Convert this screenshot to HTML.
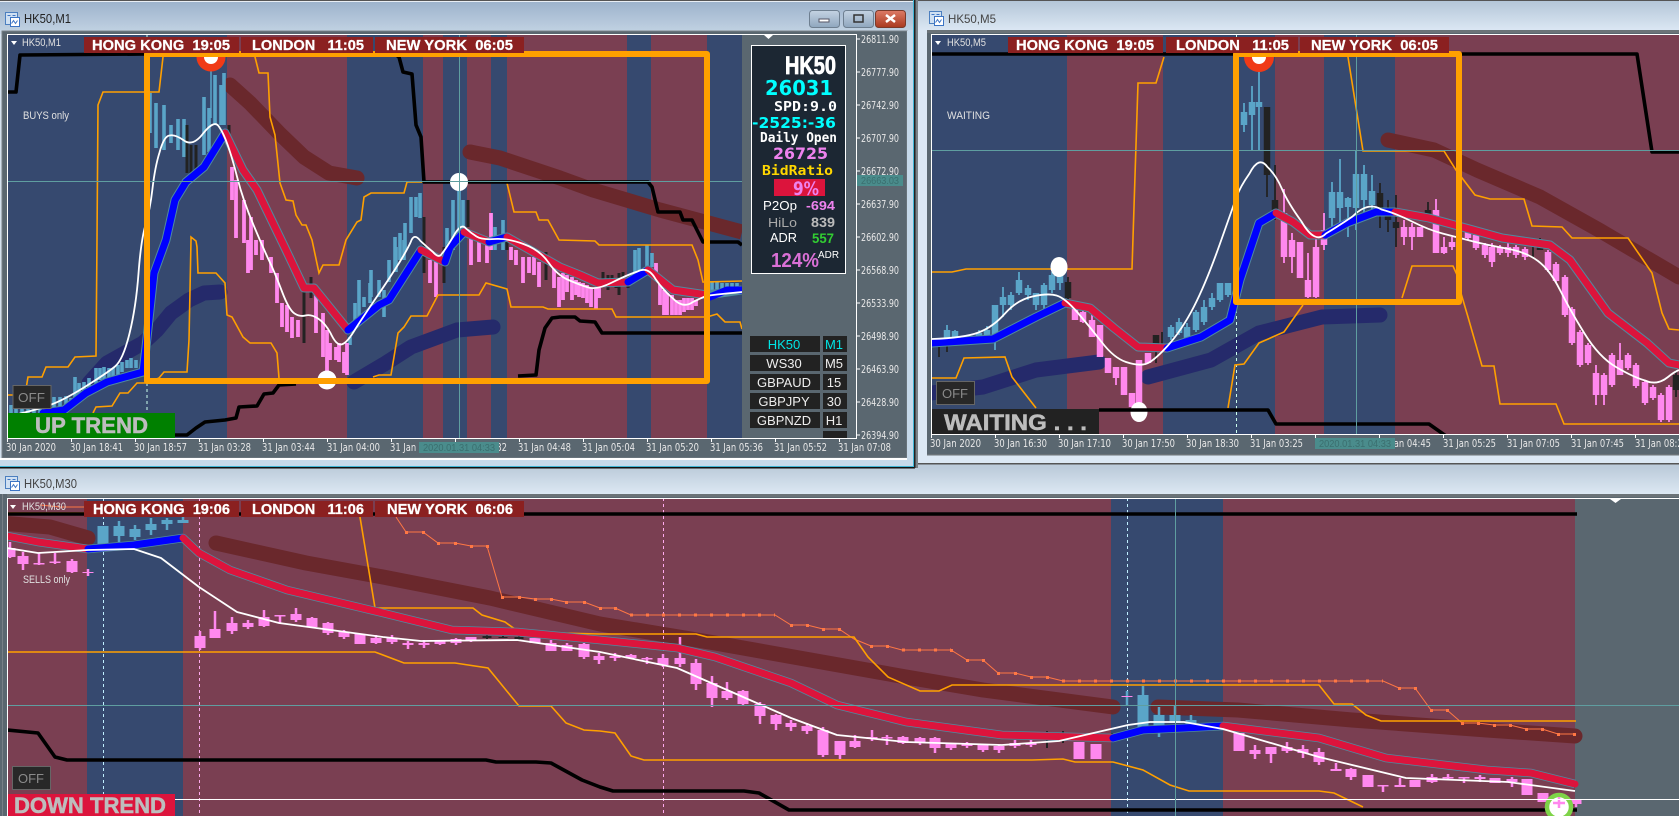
<!DOCTYPE html>
<html><head><meta charset="utf-8"><title>HK50</title>
<style>
html,body{margin:0;padding:0;background:#C4D2DF;width:1679px;height:816px;overflow:hidden}
svg{display:block;position:absolute;left:0;top:0}
text{font-family:"Liberation Sans",sans-serif}
.bar{font-weight:bold;font-size:14.500px;fill:#fff;stroke:#fff;stroke-width:.25;white-space:pre}
.ax{font-size:10.500px;fill:#e8e8e8;font-family:"DejaVu Sans","Liberation Sans",sans-serif}
.m{font-family:"DejaVu Sans Mono","Liberation Mono",monospace;font-weight:bold}
.d{font-family:"DejaVu Sans","Liberation Sans",sans-serif;font-weight:bold}
.btn{font-size:13px;fill:#eee;text-anchor:middle}
.off{font-size:13px;fill:#8a8a8a}
.lb{font-size:11px;fill:#e0e0e0}
.tr{font-weight:bold;font-size:22px;fill:#bdbdbd;stroke:#bdbdbd;stroke-width:.5}
.o{fill:none;stroke:#FFA000;stroke-width:1.600}
.k{fill:none;stroke:#000;stroke-width:3.600;stroke-linejoin:round}
.thick{fill:none;stroke:#6A282C;stroke-width:15;stroke-linecap:round;stroke-linejoin:round}
.navy{fill:none;stroke:#252A6B;stroke-width:15;stroke-linecap:round;stroke-linejoin:round}
.edge{fill:none;stroke:#4F8AA0;stroke-width:9;stroke-linejoin:round}
.b{fill:none;stroke:#0000FF;stroke-width:7;stroke-linejoin:round;stroke-linecap:round}
.r{fill:none;stroke:#DC143C;stroke-width:7;stroke-linejoin:round;stroke-linecap:round}
.w{fill:none;stroke:#fff;stroke-width:1.800;stroke-linejoin:round}
.t{fill:none;stroke:#5F9EA0;stroke-width:1}
</style></head><body>
<svg width="1679" height="816" viewBox="0 0 1679 816" xmlns="http://www.w3.org/2000/svg">
<defs>
<linearGradient id="g1" x1="0" y1="0" x2="0" y2="1"><stop offset="0" stop-color="#9DB3CC"/><stop offset="1" stop-color="#BFD0E1"/></linearGradient>
<linearGradient id="g2" x1="0" y1="0" x2="0" y2="1"><stop offset="0" stop-color="#B4C6D8"/><stop offset="1" stop-color="#DCE8F4"/></linearGradient>
<linearGradient id="g3" x1="0" y1="0" x2="0" y2="1"><stop offset="0" stop-color="#BDCCDB"/><stop offset="1" stop-color="#DCE8F3"/></linearGradient>
<linearGradient id="bt" x1="0" y1="0" x2="0" y2="1"><stop offset="0" stop-color="#C4D3E2"/><stop offset="1" stop-color="#8FA6BE"/></linearGradient>
<linearGradient id="cl" x1="0" y1="0" x2="0" y2="1"><stop offset="0" stop-color="#DD7B66"/><stop offset="1" stop-color="#A9391F"/></linearGradient>
<clipPath id="c1"><rect x="8" y="35" width="734" height="403"/></clipPath>
<clipPath id="c2"><rect x="932" y="35" width="747" height="399"/></clipPath>
<clipPath id="c3"><rect x="8" y="499" width="1582" height="317"/></clipPath>
<g id="ic"><rect x="0" y="0" width="12" height="12" fill="#CFE0F2" stroke="#4C7FBF"/><rect x="5" y="5" width="9" height="9" fill="#fff" stroke="#3C74C4"/><path d="M6 11l2-3 2 3 2-3" fill="none" stroke="#3C74C4"/><path d="M2 3h3M7 3h3" stroke="#3C74C4"/></g>
</defs>

<!-- M30 title + lower area -->
<rect x="0" y="468" width="1679" height="26" fill="url(#g3)"/>
<!-- M5 window -->
<rect x="915" y="0" width="764" height="1" fill="#555"/>
<rect x="918" y="1" width="761" height="30" fill="url(#g2)"/>
<rect x="918" y="31" width="761" height="433" fill="#DCE8F4"/>
<rect x="915" y="0" width="3" height="468" fill="#7A8288"/>
<rect x="927" y="30" width="752" height="425" fill="#5A6770"/>
<rect x="927" y="30" width="752" height="3" fill="#6B7378"/>
<rect x="927" y="454" width="752" height="1.500" fill="#6B7378"/>
<rect x="918" y="463" width="761" height="1.500" fill="#555"/>
<rect x="918" y="464.500" width="761" height="4" fill="#BDCCDB"/>
<use href="#ic" x="929.500" y="11.500"/>
<text x="948" y="23" font-size="12" fill="#444" textLength="48" lengthAdjust="spacingAndGlyphs">HK50,M5</text>

<!-- M1 window -->
<rect x="0" y="0" width="915" height="468" fill="#D4E1EE"/>
<rect x="0" y="0" width="915" height="1" fill="#555"/>
<rect x="0" y="1" width="913" height="1" fill="#E8EEF4"/>
<rect x="0" y="2" width="913" height="28" fill="url(#g1)"/>
<rect x="0" y="30" width="913" height="4" fill="#C9D8E8"/>
<rect x="2" y="31" width="905" height="427" fill="#5A6770" stroke="#777F86"/>
<rect x="0" y="458" width="913" height="2" fill="#fff"/>
<rect x="0" y="460" width="913" height="6" fill="#C6D9EA"/>
<rect x="907" y="31" width="6" height="435" fill="#C6D9EA"/>
<rect x="0" y="466" width="915" height="1" fill="#3FB4D4"/>
<rect x="0" y="467" width="915" height="1.500" fill="#111"/>
<rect x="913" y="0" width="1" height="467" fill="#3FB4D4"/>
<rect x="914" y="0" width="1.500" height="468" fill="#222"/>
<use href="#ic" x="5.500" y="12.500"/>
<text x="24" y="23" font-size="12.500" fill="#222" textLength="47" lengthAdjust="spacingAndGlyphs">HK50,M1</text>
<rect x="809.500" y="10.500" width="30" height="17" rx="3" fill="url(#bt)" stroke="#6E7F90"/>
<rect x="819" y="19" width="10" height="3" fill="#fff" stroke="#556"/>
<rect x="843.500" y="10.500" width="30" height="17" rx="3" fill="url(#bt)" stroke="#6E7F90"/>
<rect x="854" y="15" width="9" height="7" fill="none" stroke="#333" stroke-width="1.500"/>
<rect x="875.500" y="10.500" width="30" height="17" rx="3" fill="url(#cl)" stroke="#7A3A2A"/>
<path d="M886 15l9 7M895 15l-9 7" stroke="#fff" stroke-width="2.500"/>

<!-- ============ M1 CHART ============ -->
<g shape-rendering="crispEdges">
<rect x="7" y="34" width="220" height="404" fill="#36496F"/>
<rect x="227" y="34" width="120" height="404" fill="#7A3F52"/>
<rect x="347" y="34" width="76" height="404" fill="#36496F"/>
<rect x="423" y="34" width="20" height="404" fill="#7A3F52"/>
<rect x="443" y="34" width="24" height="404" fill="#36496F"/>
<rect x="467" y="34" width="24" height="404" fill="#7A3F52"/>
<rect x="491" y="34" width="16" height="404" fill="#36496F"/>
<rect x="507" y="34" width="120" height="404" fill="#7A3F52"/>
<rect x="627" y="34" width="24" height="404" fill="#36496F"/>
<rect x="651" y="34" width="56" height="404" fill="#7A3F52"/>
<rect x="707" y="34" width="35" height="404" fill="#36496F"/>
</g>
<g clip-path="url(#c1)">
<polyline class="thick" points="230,85 250,103 279,133 304,157 329,173 357,178"/>
<polyline class="thick" style="stroke-linecap:butt" points="470,152 500,158 536,170 560,178 593,190 660,210 742,232"/>
<circle cx="470" cy="152" r="7.500" fill="#6A282C"/>
<polyline class="navy" points="89,383 107,363 143,343 157,330 171,313 189,300 204,293 220,292"/>
<polyline class="navy" points="354,382 386,363 411,347 457,330 493,327"/>
<line x1="147" y1="35" x2="147" y2="438" stroke="#cfe" stroke-dasharray="3 3"/>
<!-- candles -->
<path fill="none" stroke="#5AA5C8" stroke-width="3.600" d="M11 405V413M16 403V413M22 402V413M28 400V413M34 400V413M40 399V413M46 398V413M54 397V410M60 397V408M66 396V408M71 398V406M75 377V400M79 383V400M84 382V395M89 378V393M96 368V387M100 368V380M104 367V380M109 368V382M113 368V380M118 365V377M122 362V372M127 360V368M131 358V368M136 360V368M150 93V133M156 103V148M164 105V150M171 125V143M178 119V150M184 119V157M204 97V155M209 108V152M215 75V125M221 85V125M224 73V125M350 337V345M355 303V323M359 280V317M364 297V307M370 283V303M371 270V297M379 280V297M384 290V317M389 260V282M395 237V272M396 247V272M400 233V260M404 240V260M405 223V250M411 197V233M416 197V217M420 193V218M447 228V250M453 200V250M459 190V240M463 200V230M495 227V250M503 220V250M635 250V273M639 248V275M647 245V268M652 253V267M712 282V298M717 282V296M722 283V294M727 283V292M732 283V292M737 283V290"/>
<path fill="none" stroke="#5AA5C8" stroke-width="1.500" d="M211 57V118"/>
<path fill="none" stroke="#222" stroke-width="3" d="M187 125V173M191 145V175M196 145V173M229 125V135M304 290V343M311 277V298M424 217V273M444 247V283M468 200V227M507 235V250M546 252V280M603 272V283M608 275V290M612 275V283M616 278V288M619 273V295M623 272V282M628 280V288"/>
<path fill="none" stroke="#FF88EE" stroke-width="3.800" d="M232 167V200M236 180V238M244 200V243M248 240V273M251 217V270M256 240V255M262 240V260M271 257V273M277 273V303M282 303V327M287 305V332M292 317V338M298 320V337M316 293V333M323 313V357M327 330V373M330 343V360M336 347V360M339 343V362M344 352V373M347 343V375M430 260V283M436 260V297M471 238V265M479 240V262M487 240V263M491 213V250M511 247V260M516 250V265M523 257V283M529 257V273M534 257V275M539 262V287M554 260V288M559 277V307M563 273V300M567 275V292M572 277V300M576 280V295M579 282V297M583 283V298M587 285V303M591 288V307M596 288V309M599 288V298M656 263V277M660 283V305M664 290V315M667 293V315M672 295V315M676 300V315M680 300V315M684 298V312M688 298V310M692 298V310M696 300V306"/>
<!-- orange -->
<polyline class="o" points="7,395 25,395 28,377 42,377 46,367 68,367 75,357 96,356 97,240 98,105 103,92 159,92 163,57 165,40"/>
<polyline class="o" points="252,40 255,57 259,73 268,73 270,117 275,135 280,183 286,200 293,201 296,215 302,225 306,225 312,240 319,273 323,265 339,265 346,240 357,222 361,220 364,197 371,193 404,193 407,182 425,182"/>
<polyline class="o" points="507,183 514,212 536,212 539,220 548,220 559,240 595,241 599,245 692,245 698,260 703,282 742,281"/>
<polyline class="o" points="93,413 96,407 112,406 120,393 128,393 137,383 147,383 159,378 164,372 187,372 189,340 191,240 191,237 196,241 197,247 198,273 216,273 225,283 227,315 232,317 243,337 250,343 271,343 277,353 279,378"/>
<polyline class="o" points="373,377 379,375 391,375 398,333 404,327 411,316 427,316 438,295 479,295 486,283 507,289 511,307 543,307 548,309 612,309 616,317 707,317 717,314 725,322 740,322 742,329"/>
<!-- black -->
<polyline class="k" points="7,92 16,92 20,55 145,54 395,54 399,57 403,72 412,74 416,125 421,137 424,182 648,182 652,187 658,212 680,212 683,220 692,220 703,242 738,242 742,245"/>
<polyline class="k" points="175,435 187,435 196,428 205,422 225,420 236,418 239,407 257,406 264,394 273,393 279,385 296,384"/>
<polyline class="k" points="518,376 536,375 539,350 545,328 552,318 560,317 575,317 580,321 595,322 602,333 742,333"/>
<!-- MA -->
<polyline class="edge" points="43,413 64,410 86,393 107,382 143,372 146,347 154,273 166,240 175,200 186,182 204,167 225,133 243,170 257,190 286,250 304,288 314,288 348,330 379,305 389,300 421,250 445,262 450,247 464,232 489,242 507,237 560,267 580,275 598,283 628,282 648,270 673,290 707,295 742,290"/>
<polyline class="b" points="43,413 64,410 86,393 107,382 143,372 146,347 154,273 166,240 175,200 186,182 204,167 225,133"/>
<polyline class="r" points="225,133 243,170 257,190 286,250 304,288 314,288 348,330"/>
<polyline class="b" points="348,330 379,305 389,300 421,250"/>
<polyline class="r" points="421,250 445,262"/>
<polyline class="b" points="445,262 450,247 464,232"/>
<polyline class="r" points="464,232 489,242"/>
<polyline class="b" points="489,242 507,237"/>
<polyline class="r" points="507,237 560,267 580,275 598,283 628,282"/>
<polyline class="b" points="628,282 648,270"/>
<polyline class="r" points="648,270 673,290 707,295"/>
<polyline class="b" points="710,297 727,290 742,290"/>
<path class="w" d="M14 415Q36 410 50 405Q64 400 85.500 386.500Q107 373 115 366.500Q123 360 129.500 333.500Q136 307 138.500 273.500Q141 240 145.500 225Q150 210 152.500 188.500Q155 167 159.500 152.500Q164 136 169.500 135.500Q175 134 184 140.500Q193 147 203.500 133Q214 120 218.500 126Q223 132 227.500 144.500Q232 157 237.500 178.500Q243 200 253.500 225Q264 250 269.500 261.500Q275 273 282 291.500Q289 310 294.500 313.500Q300 317 305.500 315.500Q311 314 318 318.500Q325 323 330.500 333Q336 345 341 344.500Q346 344 353.500 332Q361 320 377 296.500Q393 273 400 261.500Q407 250 410.500 242.500Q414 232 420.500 241Q427 247 433 252Q439 259 442 253.500Q445 250 453 237Q461 222 466 228.500Q471 233 476.500 236.500Q482 240 494.500 239Q507 238 523.500 244Q540 250 548.500 262.500Q557 275 568.500 280Q580 285 588.500 287.500Q597 290 612 282.500Q627 275 637.500 271.500Q648 266 655.500 279Q663 290 673 298.500Q683 309 693 302Q703 297 706.500 296Q710 295 742 292"/>
<!-- crosshair + circles -->
<circle cx="211" cy="57" r="14.500" fill="#F03A17"/><circle cx="211" cy="57" r="7" fill="#fff"/>
<circle cx="459" cy="182" r="9" fill="#fff"/>
<circle cx="327" cy="380" r="9.500" fill="#fff"/>
<line class="t" x1="7" y1="181.500" x2="857" y2="181.500"/>
<line class="t" x1="459.500" y1="34" x2="459.500" y2="438"/>
<!-- frame rect -->
<rect x="147" y="54" width="560" height="327" fill="none" stroke="#FFA000" stroke-width="6" stroke-linejoin="round"/>
</g>
<rect x="7.500" y="34.500" width="849" height="404" fill="none" stroke="#fff"/>
<path d="M764 35h9l-4.500 4z" fill="#fff"/>
<!-- timebars -->
<g shape-rendering="crispEdges" fill="#8B2020"><rect x="84" y="37" width="155" height="16"/><rect x="241" y="37" width="132" height="16"/><rect x="375" y="37" width="149" height="16"/></g>
<text class="bar" x="92" y="50" textLength="138" lengthAdjust="spacingAndGlyphs">HONG KONG  19:05</text>
<text class="bar" x="252" y="50" textLength="112" lengthAdjust="spacingAndGlyphs">LONDON   11:05</text>
<text class="bar" x="386" y="50" textLength="127" lengthAdjust="spacingAndGlyphs">NEW YORK  06:05</text>
<path d="M11 41h6l-3 4z" fill="#fff"/>
<text class="lb" x="22" y="46" textLength="39" lengthAdjust="spacingAndGlyphs">HK50,M1</text>
<text class="lb" x="23" y="119" textLength="46" lengthAdjust="spacingAndGlyphs">BUYS only</text>
<rect x="13" y="385.500" width="38" height="23" fill="#282828" stroke="#666"/>
<text class="off" x="18" y="402" textLength="27" lengthAdjust="spacingAndGlyphs">OFF</text>
<rect x="8" y="413" width="167" height="25" fill="#008000"/>
<text class="tr" x="35" y="433" textLength="113" lengthAdjust="spacingAndGlyphs">UP TREND</text>
<!-- info panel -->
<rect x="751.500" y="45.500" width="94" height="228" fill="#1C2733" stroke="#fff"/>
<text x="785" y="74" font-size="25" font-weight="bold" fill="#fff" stroke="#fff" stroke-width=".8" textLength="51" lengthAdjust="spacingAndGlyphs">HK50</text>
<text class="d" x="765" y="95" font-size="20" fill="#00FFFF" textLength="68" lengthAdjust="spacingAndGlyphs">26031</text>
<text class="m" x="774" y="111" font-size="13.500" fill="#fff" textLength="63" lengthAdjust="spacingAndGlyphs">SPD:9.0</text>
<text class="d" x="752" y="128" font-size="15" fill="#00FFFF" textLength="84" lengthAdjust="spacingAndGlyphs">-2525:-36</text>
<text class="m" x="760" y="142" font-size="13" fill="#fff" textLength="77" lengthAdjust="spacingAndGlyphs">Daily Open</text>
<text class="d" x="773" y="159" font-size="16" fill="#EE82EE" textLength="55" lengthAdjust="spacingAndGlyphs">26725</text>
<text class="m" x="762" y="175" font-size="13.500" fill="#FFD700" textLength="71" lengthAdjust="spacingAndGlyphs">BidRatio</text>
<rect x="774" y="179" width="51" height="17" fill="#DC143C"/>
<text class="d" x="793" y="195" font-size="19" fill="#EE82EE" textLength="26" lengthAdjust="spacingAndGlyphs">9%</text>
<text x="763" y="210" font-size="13" fill="#fff" textLength="34" lengthAdjust="spacingAndGlyphs">P2Op</text>
<text x="806" y="210" font-size="13" font-weight="bold" fill="#EE82EE" textLength="29" lengthAdjust="spacingAndGlyphs">-694</text>
<text x="768" y="227" font-size="13" fill="#aaa" textLength="29" lengthAdjust="spacingAndGlyphs">HiLo</text>
<text x="811" y="227" font-size="13.500" font-weight="bold" fill="#bbb" textLength="24" lengthAdjust="spacingAndGlyphs">839</text>
<text x="770" y="242" font-size="13" fill="#fff" textLength="27" lengthAdjust="spacingAndGlyphs">ADR</text>
<text x="812" y="243" font-size="13.500" font-weight="bold" fill="#32CD32" textLength="22" lengthAdjust="spacingAndGlyphs">557</text>
<text x="771" y="267" font-size="20" font-weight="bold" fill="#DA70D6" textLength="48" lengthAdjust="spacingAndGlyphs">124%</text>
<text x="818" y="258" font-size="10.500" fill="#fff" textLength="21" lengthAdjust="spacingAndGlyphs">ADR</text>
<!-- symbol buttons -->
<g fill="#222"><rect x="750" y="336" width="70" height="16"/><rect x="823" y="336" width="24" height="16"/><rect x="750" y="355" width="70" height="16"/><rect x="823" y="355" width="24" height="16"/><rect x="750" y="374" width="70" height="16"/><rect x="823" y="374" width="24" height="16"/><rect x="750" y="393" width="70" height="16"/><rect x="823" y="393" width="24" height="16"/><rect x="750" y="412" width="70" height="16"/><rect x="823" y="412" width="24" height="16"/><rect x="823" y="431" width="24" height="7"/></g>
<text class="btn" x="784" y="349" style="fill:#00E5E5">HK50</text><text class="btn" x="834" y="349" style="fill:#00E5E5">M1</text>
<text class="btn" x="784" y="368">WS30</text><text class="btn" x="834" y="368">M5</text>
<text class="btn" x="784" y="387">GBPAUD</text><text class="btn" x="834" y="387">15</text>
<text class="btn" x="784" y="406">GBPJPY</text><text class="btn" x="834" y="406">30</text>
<text class="btn" x="784" y="425">GBPNZD</text><text class="btn" x="834" y="425">H1</text>
<!-- price axis -->
<path stroke="#fff" d="M856 39h4M856 72h4M856 105h4M856 138h4M856 171h4M856 204h4M856 237h4M856 270h4M856 303h4M856 336h4M856 369h4M856 402h4M856 435h4"/>
<text class="ax" x="861" y="43" textLength="38" lengthAdjust="spacingAndGlyphs">26811.90</text>
<text class="ax" x="861" y="76" textLength="38" lengthAdjust="spacingAndGlyphs">26777.90</text>
<text class="ax" x="861" y="109" textLength="38" lengthAdjust="spacingAndGlyphs">26742.90</text>
<text class="ax" x="861" y="142" textLength="38" lengthAdjust="spacingAndGlyphs">26707.90</text>
<text class="ax" x="861" y="175" textLength="38" lengthAdjust="spacingAndGlyphs">26672.90</text>
<text class="ax" x="861" y="208" textLength="38" lengthAdjust="spacingAndGlyphs">26637.90</text>
<text class="ax" x="861" y="241" textLength="38" lengthAdjust="spacingAndGlyphs">26602.90</text>
<text class="ax" x="861" y="274" textLength="38" lengthAdjust="spacingAndGlyphs">26568.90</text>
<text class="ax" x="861" y="307" textLength="38" lengthAdjust="spacingAndGlyphs">26533.90</text>
<text class="ax" x="861" y="340" textLength="38" lengthAdjust="spacingAndGlyphs">26498.90</text>
<text class="ax" x="861" y="373" textLength="38" lengthAdjust="spacingAndGlyphs">26463.90</text>
<text class="ax" x="861" y="406" textLength="38" lengthAdjust="spacingAndGlyphs">26428.90</text>
<text class="ax" x="861" y="439" textLength="38" lengthAdjust="spacingAndGlyphs">26394.90</text>
<rect x="857" y="175" width="46" height="11" fill="#4A8C8C"/>
<text x="861" y="184" font-size="10" fill="#3B6F6F" textLength="38" lengthAdjust="spacingAndGlyphs">26663.03</text>
<!-- time axis -->
<path stroke="#fff" d="M7.500 438v4M71.500 438v4M135.500 438v4M199.500 438v4M263.500 438v4M327.500 438v4M391.500 438v4M455.500 438v4M519.500 438v4M583.500 438v4M647.500 438v4M711.500 438v4M775.500 438v4M839.500 438v4"/>
<text class="ax" x="6" y="451" textLength="50" lengthAdjust="spacingAndGlyphs">30 Jan 2020</text>
<text class="ax" x="70" y="451" textLength="53" lengthAdjust="spacingAndGlyphs">30 Jan 18:41</text>
<text class="ax" x="134" y="451" textLength="53" lengthAdjust="spacingAndGlyphs">30 Jan 18:57</text>
<text class="ax" x="198" y="451" textLength="53" lengthAdjust="spacingAndGlyphs">31 Jan 03:28</text>
<text class="ax" x="262" y="451" textLength="53" lengthAdjust="spacingAndGlyphs">31 Jan 03:44</text>
<text class="ax" x="327" y="451" textLength="53" lengthAdjust="spacingAndGlyphs">31 Jan 04:00</text>
<text class="ax" x="390" y="451" textLength="53" lengthAdjust="spacingAndGlyphs">31 Jan 04:16</text>
<text class="ax" x="454" y="451" textLength="53" lengthAdjust="spacingAndGlyphs">31 Jan 04:32</text>
<text class="ax" x="518" y="451" textLength="53" lengthAdjust="spacingAndGlyphs">31 Jan 04:48</text>
<text class="ax" x="582" y="451" textLength="53" lengthAdjust="spacingAndGlyphs">31 Jan 05:04</text>
<text class="ax" x="646" y="451" textLength="53" lengthAdjust="spacingAndGlyphs">31 Jan 05:20</text>
<text class="ax" x="710" y="451" textLength="53" lengthAdjust="spacingAndGlyphs">31 Jan 05:36</text>
<text class="ax" x="774" y="451" textLength="53" lengthAdjust="spacingAndGlyphs">31 Jan 05:52</text>
<text class="ax" x="838" y="451" textLength="53" lengthAdjust="spacingAndGlyphs">31 Jan 07:08</text>
<rect x="419" y="442" width="80" height="11" fill="#4A8C8C"/>
<text x="423" y="451" font-size="10" fill="#3B6F6F" textLength="72" lengthAdjust="spacingAndGlyphs">2020.01.31 04:33</text>

<!-- ============ M5 CHART ============ -->
<g shape-rendering="crispEdges">
<rect x="931" y="34" width="136" height="400" fill="#36496F"/>
<rect x="1067" y="34" width="96" height="400" fill="#7A3F52"/>
<rect x="1163" y="34" width="112" height="400" fill="#36496F"/>
<rect x="1275" y="34" width="49" height="400" fill="#7A3F52"/>
<rect x="1324" y="34" width="71" height="400" fill="#36496F"/>
<rect x="1395" y="34" width="284" height="400" fill="#7A3F52"/>
</g>
<g clip-path="url(#c2)">
<polyline class="thick" points="1388,140 1434,150 1477,170 1540,197 1599,230 1679,277"/>
<polyline class="navy" points="931,393 983,387 1036,370 1099,362"/>
<polyline class="navy" points="1148,377 1211,360 1259,333 1322,317 1380,315"/>
<line x1="1236.500" y1="34" x2="1236.500" y2="434" stroke="#cfe" stroke-dasharray="3 3"/>
<path fill="none" stroke="#5AA5C8" stroke-width="1.800" d="M947 325V340M955 330V340M979 330V340M987 326V340M995 305V350M1003 287V317M1011 292V310M1019 272V295M1028 285V300M1036 293V310M1044 283V310M1052 272V293M1060 270V290M1171 325V340M1179 318V335M1187 323V342M1196 310V332M1204 300V325M1212 293V310M1220 283V302M1228 283V297M1244 103V132M1252 86V150M1259 57V150M1332 182V232M1340 159V228M1348 197V237M1356 150V230M1364 165V220M1372 175V213"/>
<path fill="none" stroke="#5AA5C8" stroke-width="6.500" d="M947 330V338M955 331V340M979 333V337M987 330V337M995 305V337M1003 297V305M1011 295V305M1019 280V293M1028 288V295M1036 293V305M1044 285V305M1052 275V290M1060 273V283M1171 327V337M1179 322V333M1187 327V340M1196 312V330M1204 307V322M1212 298V307M1220 283V300M1228 283V295M1244 112V125M1252 102V115M1259 102V107M1332 192V218M1340 192V208M1348 198V207M1356 174V208M1364 174V200M1372 191V205"/>
<path fill="none" stroke="#222" stroke-width="1.800" d="M939 347V357M947 345V352M1068 277V300M1156 335V363M1162 332V345M1267 107V197M1275 165V220M1380 183V228M1388 200V232M1396 195V247M1428 202V220M1533 247V257M1540 238V250M1676 370V397"/>
<path fill="none" stroke="#222" stroke-width="6.500" d="M1068 282V298M1156 335V345M1267 107V175M1275 200V210M1380 193V213M1388 213V220M1396 222V228M1428 210V215M1540 240V250M1676 375V390"/>
<path fill="none" stroke="#FF88EE" stroke-width="1.800" d="M1075 305V320M1083 310V323M1092 315V337M1100 325V357M1108 358V373M1116 367V385M1124 367V395M1132 393V407M1139 360V408M1148 353V363M1284 189V263M1292 233V273M1300 242V278M1308 253V298M1316 237V298M1324 213V250M1404 220V245M1412 223V250M1420 227V237M1436 199V253M1444 237V254M1452 237V250M1468 230V240M1476 233V250M1485 243V258M1492 243V267M1500 245V255M1508 242V257M1516 245V258M1525 247V260M1548 250V272M1556 262V283M1565 275V317M1572 307V345M1580 330V367M1588 343V365M1596 365V405M1604 373V405M1612 353V387M1620 343V375M1628 353V370M1636 363V388M1645 380V405M1653 385V400M1661 393V422M1669 385V422"/>
<path fill="none" stroke="#FF88EE" stroke-width="6.500" d="M1075 307V320M1083 312V322M1092 320V337M1100 325V357M1108 358V373M1116 367V378M1124 367V395M1132 393V407M1139 360V408M1148 353V363M1284 213V257M1292 240V257M1300 242V278M1308 280V297M1316 247V297M1324 230V245M1404 227V237M1412 227V237M1420 227V237M1436 210V253M1444 247V253M1452 242V247M1468 232V238M1476 235V248M1485 245V255M1492 247V262M1500 247V253M1508 247V253M1516 247V255M1525 249V257M1548 252V270M1556 264V281M1565 277V315M1572 309V343M1580 332V365M1588 345V363M1596 373V395M1604 375V395M1612 355V385M1620 360V375M1628 355V368M1636 365V386M1645 382V403M1653 387V398M1661 395V420M1669 387V420"/>
<polyline class="o" points="931,272 952,272 966,269 1132,269 1138,83 1156,83 1164,57"/>
<polyline class="o" points="1348,57 1363,151 1444,151 1456,170 1475,195 1490,199 1524,199 1532,226 1562,227 1572,238 1628,238 1652,273 1662,313 1669,329 1679,330"/>
<polyline class="o" points="931,378 956,378 964,358 1005,357 1012,377 1036,408"/>
<polyline class="o" points="1228,408 1235,365 1244,364 1259,343 1284,332 1303,305"/>
<polyline class="o" points="1402,298 1412,266 1453,266 1458,277 1460,290 1468,317 1482,366 1494,366 1500,404 1556,404 1564,424 1679,424"/>
<ellipse cx="1059" cy="267" rx="8.500" ry="10" fill="#fff"/>
<ellipse cx="1139" cy="412" rx="8.500" ry="10" fill="#fff"/>
<polyline class="k" points="931,54 1637,54 1652,152 1679,152"/>
<polyline class="k" points="1099,410 1268,410 1276,424 1429,424 1446,436"/>
<polyline class="edge" points="931,343 993,339 1036,317 1065,303 1090,308 1114,328 1138,347 1167,348 1201,337 1230,320 1240,280 1259,223 1276,213 1293,222 1310,235 1325,235 1347,223 1376,212 1395,212 1429,218 1473,230 1502,238 1550,245 1570,260 1608,313 1647,343 1669,363 1679,365"/>
<polyline class="b" points="931,343 993,339 1036,317 1065,303"/>
<polyline class="r" points="1065,303 1090,308 1114,328 1138,347 1167,348"/>
<polyline class="b" points="1167,348 1201,337 1230,320 1240,280 1259,223 1276,213"/>
<polyline class="r" points="1276,213 1293,222 1310,235 1325,235"/>
<polyline class="b" points="1325,235 1347,223 1376,212 1395,212"/>
<polyline class="r" points="1395,212 1429,218 1473,230 1502,238 1550,245 1570,260 1608,313 1647,343 1669,363 1679,365"/>
<path class="w" d="M931 339Q964 338 978.500 332.500Q993 327 1005 313.500Q1017 300 1032.500 296.500Q1048 293 1056.500 295.500Q1065 298 1077.500 312.500Q1090 327 1102 342.500Q1114 358 1126 362Q1138 366 1145.500 364Q1153 362 1167.500 346Q1182 330 1194 306.500Q1206 283 1219.500 245Q1233 207 1236.500 197Q1240 187 1249.500 173.500Q1259 155 1267.500 167Q1276 175 1282 189Q1288 203 1301.500 221.500Q1315 245 1326 233.500Q1337 227 1352.500 216.500Q1368 201 1381.500 209.500Q1395 213 1412 221.500Q1429 230 1442.500 233.500Q1456 237 1471.500 241Q1487 245 1506.500 248.500Q1526 252 1538 261Q1550 270 1560 290Q1570 310 1584.500 333.500Q1599 357 1616 367Q1633 377 1645 380.500Q1657 386 1668 377Q1674 372 1679 370"/>
<circle cx="1259" cy="57" r="15" fill="#F03A17"/><circle cx="1259" cy="57" r="7" fill="#fff"/>
<line class="t" x1="931" y1="150.500" x2="1679" y2="150.500"/>
<line class="t" x1="1356.500" y1="34" x2="1356.500" y2="434"/>
<rect x="1236" y="54" width="223" height="248" fill="none" stroke="#FFA000" stroke-width="6" stroke-linejoin="round"/>
</g>
<rect x="931.500" y="34.500" width="760" height="400" fill="none" stroke="#fff"/>
<g shape-rendering="crispEdges" fill="#8B2020"><rect x="1008" y="37" width="155" height="16"/><rect x="1166" y="37" width="132" height="16"/><rect x="1300" y="37" width="149" height="16"/></g>
<text class="bar" x="1016" y="50" textLength="138" lengthAdjust="spacingAndGlyphs">HONG KONG  19:05</text>
<text class="bar" x="1176" y="50" textLength="113" lengthAdjust="spacingAndGlyphs">LONDON   11:05</text>
<text class="bar" x="1311" y="50" textLength="127" lengthAdjust="spacingAndGlyphs">NEW YORK  06:05</text>
<path d="M935 41h6l-3 4z" fill="#fff"/>
<text class="lb" x="947" y="46" textLength="39" lengthAdjust="spacingAndGlyphs">HK50,M5</text>
<text class="lb" x="947" y="119" textLength="43" lengthAdjust="spacingAndGlyphs">WAITING</text>
<rect x="936.500" y="381.500" width="38" height="23" fill="#282828" stroke="#666"/>
<text class="off" x="942" y="398" textLength="26" lengthAdjust="spacingAndGlyphs">OFF</text>
<rect x="932" y="409" width="167" height="25" fill="#222"/>
<text class="tr" x="944" y="430" textLength="143" lengthAdjust="spacingAndGlyphs">WAITING . . .</text>
<path stroke="#fff" d="M931.500 434v4M995.500 434v4M1059.500 434v4M1123.500 434v4M1187.500 434v4M1251.500 434v4M1315.500 434v4M1379.500 434v4M1443.500 434v4M1507.500 434v4M1571.500 434v4M1635.500 434v4"/>
<text class="ax" x="930" y="447" textLength="51" lengthAdjust="spacingAndGlyphs">30 Jan 2020</text>
<text class="ax" x="994" y="447" textLength="53" lengthAdjust="spacingAndGlyphs">30 Jan 16:30</text>
<text class="ax" x="1058" y="447" textLength="53" lengthAdjust="spacingAndGlyphs">30 Jan 17:10</text>
<text class="ax" x="1122" y="447" textLength="53" lengthAdjust="spacingAndGlyphs">30 Jan 17:50</text>
<text class="ax" x="1186" y="447" textLength="53" lengthAdjust="spacingAndGlyphs">30 Jan 18:30</text>
<text class="ax" x="1250" y="447" textLength="53" lengthAdjust="spacingAndGlyphs">31 Jan 03:25</text>
<text class="ax" x="1378" y="447" textLength="53" lengthAdjust="spacingAndGlyphs">31 Jan 04:45</text>
<text class="ax" x="1443" y="447" textLength="53" lengthAdjust="spacingAndGlyphs">31 Jan 05:25</text>
<text class="ax" x="1507" y="447" textLength="53" lengthAdjust="spacingAndGlyphs">31 Jan 07:05</text>
<text class="ax" x="1571" y="447" textLength="53" lengthAdjust="spacingAndGlyphs">31 Jan 07:45</text>
<text class="ax" x="1635" y="447" textLength="53" lengthAdjust="spacingAndGlyphs">31 Jan 08:25</text>
<rect x="1315" y="438" width="80" height="11" fill="#4A8C8C"/>
<text x="1319" y="447" font-size="10" fill="#3B6F6F" textLength="72" lengthAdjust="spacingAndGlyphs">2020.01.31 04:33</text>

<!-- ============ M30 ============ -->
<use href="#ic" x="5.500" y="476.500"/>
<text x="24" y="488" font-size="12.500" fill="#444" textLength="53" lengthAdjust="spacingAndGlyphs">HK50,M30</text>
<rect x="0" y="494" width="1679" height="322" fill="#5A6770"/>
<rect x="0" y="494" width="1679" height="3" fill="#6B7378"/>
<g shape-rendering="crispEdges">
<rect x="7" y="498" width="80" height="318" fill="#7A3F52"/>
<rect x="87" y="498" width="96" height="318" fill="#36496F"/>
<rect x="183" y="498" width="928" height="318" fill="#7A3F52"/>
<rect x="1111" y="498" width="112" height="318" fill="#36496F"/>
<rect x="1223" y="498" width="352" height="318" fill="#7A3F52"/>
</g>
<g clip-path="url(#c3)">
<polyline class="thick" style="stroke-linecap:round" points="0,523 50,527 88,538"/>
<polyline class="thick" points="216,543 306,563 383,577 490,598 600,624 715,643 906,677 983,690 1113,707"/>
<polyline class="thick" points="1158,707 1238,710 1352,720 1487,730 1575,736"/>
<line x1="103.500" y1="498" x2="103.500" y2="816" stroke="#BFEFFF" stroke-dasharray="3 3"/>
<line x1="1127.500" y1="498" x2="1127.500" y2="816" stroke="#BFEFFF" stroke-dasharray="3 3"/>
<line x1="199.500" y1="498" x2="199.500" y2="816" stroke="#FFAAEE" stroke-dasharray="3 3"/>
<line x1="663.500" y1="498" x2="663.500" y2="816" stroke="#FFAAEE" stroke-dasharray="3 3"/>
<!-- blue candles -->
<path fill="none" stroke="#5AA5C8" stroke-width="2.500" d="M119 521V542M135 525V540M151 518V535M167 518V530M183 517V523M1127 691V706M1143 686V727M1159 707V737M1175 705V722M1191 715V723"/>
<path fill="none" stroke="#5AA5C8" stroke-width="11" d="M103 526V545M119 526V536M135 529V537M151 524V530M167 520V524M183 520V523M1143 695V727M1159 715V727M1175 715V723M1191 720V724"/>
<path fill="none" stroke="#FF88EE" stroke-width="2.500" d="M10 542V558M23 552V570M39 553V565M55 553V564M72 559V573M88 569V576M200 631V650M215 611V638M232 617V634M248 620V629M264 610V627M280 615V623M296 608V622M312 617V627M328 622V635M344 630V639M376 635V644M392 635V644M408 641V649M424 640V648M440 640V645M456 638V645M471 637V642M535 638V643M551 640V651M567 643V651M584 643V659M599 653V664M615 653V661M631 654V659M647 657V664M663 654V667M680 637V667M696 659V690M712 676V707M727 682V700M743 690V705M760 702V724M776 714V730M791 720V731M807 723V734M823 727V757M840 741V759M855 735V748M872 730V741M887 735V745M903 736V744M920 737V745M935 737V753M951 744V750M967 742V748M983 745V752M999 745V753M1015 740V748M1031 740V747M1255 745V759M1271 747V763M1287 742V753M1303 745V758M1319 748V765M1336 763V771M1351 768V780M1383 785V792M1400 778V787M1432 774V783M1448 774V780M1464 777V783M1480 775V782M1512 777V787M1543 793V802M1559 797V808M1576 799V807"/>
<path fill="none" stroke="#FF88EE" stroke-width="11" d="M10 548V557M23 556V564M39 563V564.500M55 561.500V563M72 561V572M88 572V573M200 636V648M215 629V638M232 623V631M248 623V627M264 617V626M280 615V616.500M296 614V620M312 618V627M328 623V633M344 632V637M360 634V644M376 638V643M392 638V642M408 643V645M424 643V645M440 640V644M456 639V643M471 637V641M535 638V643M551 643V651M567 645V651M584 644V657M599 656V660M615 656V658M631 655V658M647 658V659.500M663 658V665M680 658V664M696 663V684M712 683V698M727 691V698M743 691V704M760 704V716M776 715V724M791 723V727M807 726V731M823 730V755M840 741V755M855 741V747M872 737V739M887 737V738.500M903 737V743M920 738V743M935 738V748M951 744V748M967 744V746M983 745V750M999 746V750M1015 743V746M1031 743V745M1079 742V759M1096 744V759M1239 733V751M1255 750V754M1271 747V754M1287 747V751M1303 749V753M1319 752V762M1336 769V771M1351 769V777M1368 775V787M1383 785V786.500M1400 785V787M1415 780V787M1432 777V782M1448 777V778.500M1464 777V778.500M1480 777V779M1495 778V783M1512 779V782M1527 779V795M1543 793V802M1559 801V805M1576 799V804"/>
<path fill="none" stroke="#222" stroke-width="2" d="M487 635V639M503 636V638M519 636V640M1047 731V748M1063 731V743M1112 733V741"/>
<path fill="none" stroke="#222" stroke-width="9" d="M487 636V638M503 637V638M519 637V639"/>
<path fill="none" stroke="#FF88EE" stroke-width="11" d="M1127 696V697"/>
<!-- coral -->
<polyline fill="none" stroke="#FF7744" stroke-width="1" points="396,517 406,532 423,532 438,543 455,543 471,546 487,546 502,597 519,597 535,599 551,599 566,602 584,602 600,608 615,608 631,615 775,615 791,625 807,625 823,629 839,629 854,639 871,646 887,646 902,650 951,650 967,660 983,660 998,673 1015,673 1031,677 1047,677 1063,681 1383,681 1399,688 1415,688 1431,710 1447,710 1462,723 1478,723 1494,725 1510,725 1526,729 1542,729 1558,734 1574,734"/>
<polyline fill="none" stroke="#FF7744" stroke-width="1" points="40,505 60,507 84,507"/>
<path fill="none" stroke="#FF7744" stroke-width="3" stroke-dasharray="3 13" d="M1062 681H1383M630 615H775M902 650H951"/>
<path fill="#FF7744" d="M405 531h3v3h-3zM422 531h3v3h-3zM437 542h3v3h-3zM454 542h3v3h-3zM470 545h3v3h-3zM486 545h3v3h-3zM501 596h3v3h-3zM518 596h3v3h-3zM534 598h3v3h-3zM550 598h3v3h-3zM565 601h3v3h-3zM583 601h3v3h-3zM599 607h3v3h-3zM614 607h3v3h-3zM1398 687h3v3h-3zM1414 687h3v3h-3zM1430 709h3v3h-3zM1446 709h3v3h-3zM1461 722h3v3h-3zM1477 722h3v3h-3zM1493 724h3v3h-3zM1509 724h3v3h-3zM1525 728h3v3h-3zM1541 728h3v3h-3zM1557 733h3v3h-3zM1573 733h3v3h-3zM790 624h3v3h-3zM806 624h3v3h-3zM822 628h3v3h-3zM838 628h3v3h-3zM870 645h3v3h-3zM886 645h3v3h-3zM950 649h3v3h-3zM966 659h3v3h-3zM982 659h3v3h-3zM997 672h3v3h-3zM1014 672h3v3h-3zM1030 676h3v3h-3zM1046 676h3v3h-3z"/>
<!-- orange -->
<polyline class="o" points="7,513 84,513"/>
<polyline class="o" points="360,517 375,608 473,608 482,615 505,622 519,632 600,634 696,634 707,637 854,637 868,657 888,677 920,691 939,691 952,685 1319,685 1334,704 1352,704 1366,715 1381,721 1576,721"/>
<polyline class="o" points="7,652 375,652 404,663 455,663 488,668 519,706 551,706 566,723 584,730 600,731 615,733 631,756 644,760 1032,760 1063,759 1075,762 1113,762 1143,770 1170,785 1189,791 1319,791 1334,793 1363,807"/>
<!-- black -->
<line x1="7" y1="514" x2="1577" y2="514" stroke="#000" stroke-width="3.600"/>
<polyline class="k" points="7,730 38,733 55,757 67,760 486,760 496,762 536,762 551,763 582,780 600,787 613,791 744,791 759,793 789,810 1577,810"/>
<!-- MA -->
<polyline class="edge" style="stroke-width:8.500" points="7,536 38,542 88,549 134,545 183,538 199,553 230,570 287,590 383,613 452,630 517,632 600,640 677,648 715,657 791,683 837,705 906,722 1002,735 1113,738 1143,730 1184,728 1223,726 1319,738 1386,758 1487,770 1531,773 1575,784"/>
<polyline class="r" points="7,536 38,542 88,549"/>
<polyline class="b" points="88,549 134,545 183,538"/>
<polyline class="r" points="183,538 199,553 230,570 287,590 383,613 452,630 517,632 600,640 677,648 715,657 791,683 837,705 906,722 1002,735 1113,738"/>
<polyline class="b" points="1113,738 1143,730 1184,728 1223,726"/>
<polyline class="r" points="1223,726 1319,738 1386,758 1487,770 1531,773 1575,784"/>
<polyline class="w" points="7,548 38,553 88,550 134,549 161,558 199,587 237,612 279,623 383,637 421,641 517,640 600,652 677,668 734,693 791,718 837,735 906,742 1002,745 1059,741 1128,725 1150,722 1184,722 1223,729 1319,757 1406,778 1508,782 1575,791"/>
<circle cx="1559" cy="807" r="12" fill="#fff" stroke="#7ED348" stroke-width="4.500"/>
<path fill="none" stroke="#FF88EE" stroke-width="2.500" d="M1559 797V808M1553 803H1565"/>
</g>
<line class="t" x1="7" y1="705.500" x2="1679" y2="705.500"/>
<line x1="175" y1="799.500" x2="1679" y2="799.500" stroke="#fff"/>
<line class="t" x1="1175.500" y1="498" x2="1175.500" y2="816"/>
<rect x="0" y="494" width="7" height="322" fill="#5A6770"/>
<rect x="2" y="494" width="1" height="322" fill="#777F86"/>
<line x1="7.500" y1="498" x2="7.500" y2="816" stroke="#fff"/>
<line x1="7" y1="498.500" x2="1679" y2="498.500" stroke="#fff"/>
<path d="M1610 499h11l-5.500 4z" fill="#fff"/>
<g shape-rendering="crispEdges" fill="#8B2020"><rect x="84" y="501" width="155" height="16"/><rect x="241" y="501" width="132" height="16"/><rect x="375" y="501" width="149" height="16"/></g>
<text class="bar" x="93" y="514" textLength="137" lengthAdjust="spacingAndGlyphs">HONG KONG  19:06</text>
<text class="bar" x="252" y="514" textLength="112" lengthAdjust="spacingAndGlyphs">LONDON   11:06</text>
<text class="bar" x="387" y="514" textLength="126" lengthAdjust="spacingAndGlyphs">NEW YORK  06:06</text>
<path d="M10 505h6l-3 4z" fill="#fff"/>
<text class="lb" x="22" y="510" textLength="44" lengthAdjust="spacingAndGlyphs">HK50,M30</text>
<text class="lb" x="23" y="583" textLength="47" lengthAdjust="spacingAndGlyphs">SELLS only</text>
<rect x="12.500" y="766.500" width="38" height="23" fill="#282828" stroke="#666"/>
<text class="off" x="18" y="783" textLength="26" lengthAdjust="spacingAndGlyphs">OFF</text>
<rect x="8" y="794" width="167" height="22" fill="#DC143C"/>
<text class="tr" x="14" y="813" textLength="152" lengthAdjust="spacingAndGlyphs">DOWN TREND</text>
</svg>
</body></html>
